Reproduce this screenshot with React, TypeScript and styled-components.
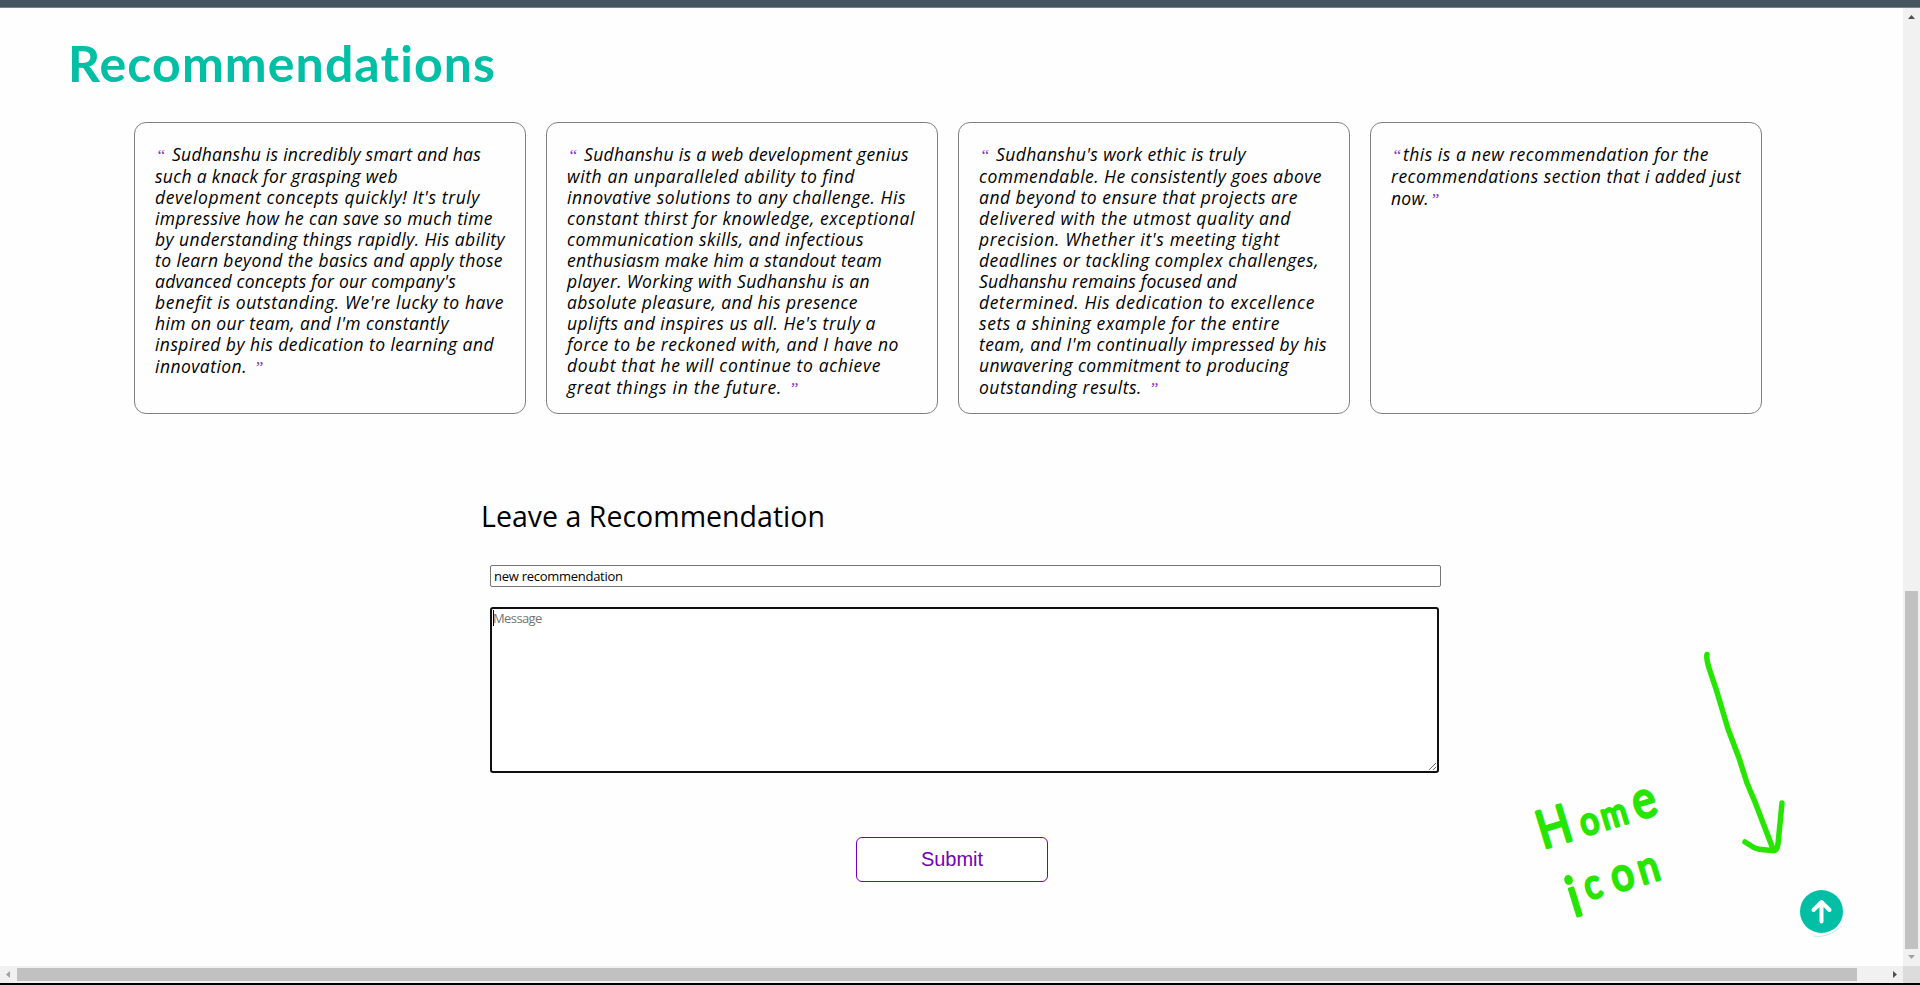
import React, { useLayoutEffect, useRef, useState } from "react";
import styled, { createGlobalStyle } from "styled-components";

const GlobalStyle = createGlobalStyle`
  * { box-sizing: border-box; }
  body {
    margin: 0;
    background: #fff;
    overflow: hidden;
    font-family: "Trebuchet MS", "Open Sans", "Noto Sans", sans-serif;
    color: #000;
  }
`;

const Window = styled.div`
  position: relative;
  display: flex;
  flex-direction: column;
  width: 1920px;
  height: 985px;
  background: #fefefe;
  border-bottom: 2px solid #000;
`;

const TopBar = styled.div`
  height: 8px;
  flex: none;
  background: #455660;
  border-bottom: 1px solid #77858b;
`;

const Viewport = styled.div`
  display: grid;
  flex: 1;
  grid-template-columns: 1903px 17px;
  grid-template-rows: 958px 17px;
`;

const Page = styled.main`
  display: flex;
  flex-direction: column;
  align-items: flex-start;
  overflow: hidden;
`;

const Title = styled.h1`
  margin: 22px 0 0 68px;
  height: 66px;
  line-height: 66px;
  font-family: "Trebuchet MS", Lato, sans-serif;
  font-size: 50px;
  font-weight: 700;
  color: #00bfa5;
  white-space: nowrap;
`;

const Cards = styled.section`
  display: flex;
  gap: 20px;
  margin: 26px 0 0 134px;
`;

const Card = styled.blockquote`
  width: 392px;
  height: 292px;
  margin: 0;
  padding: 20px 20px 0;
  border: 1px solid #808080;
  border-radius: 12px;
  font-size: 17.5px;
  font-style: italic;
`;

const Line = styled.div<{ $first?: boolean; $last?: boolean }>`
  height: ${(p) => (p.$first ? 23 : 21)}px;
  line-height: ${(p) => (p.$first || p.$last ? 23 : 21)}px;
  white-space: pre;
`;

const Quote = styled.span<{ $width: number; $indent: number }>`
  display: inline-block;
  width: ${(p) => p.$width}px;
  padding-left: ${(p) => p.$indent}px;
  font-family: "Liberation Serif", serif;
  font-size: 17px;
  line-height: 10px;
  color: #8630c8;
`;

const Form = styled.form`
  display: flex;
  flex-direction: column;
  align-items: flex-start;
  margin: 82px 0 0 481px;
  width: 961px;
`;

const FormTitle = styled.h2`
  margin: 0;
  height: 40px;
  line-height: 40px;
  font-size: 28.5px;
  font-weight: 400;
  white-space: nowrap;
`;

const NameInput = styled.input`
  width: 951px;
  height: 22px;
  margin: 29px 0 0 9px;
  padding: 0 3px;
  border: 1px solid #767676;
  border-radius: 2px;
  outline: none;
  background: #fff;
  color: #000;
  font: 13px "Trebuchet MS", "Open Sans", sans-serif;
  letter-spacing: -0.27px;
`;

const MessageWrap = styled.div`
  position: relative;
  margin: 20px 0 0 9px;
  width: 949px;
  height: 166px;
`;

const Message = styled.textarea`
  display: block;
  width: 100%;
  height: 100%;
  padding: 0 1px;
  border: 2px solid #101010;
  border-radius: 3px;
  outline: none;
  background: #fff;
  font: 13px/18px "Trebuchet MS", "Open Sans", sans-serif;
  letter-spacing: -0.6px;
  &::placeholder { color: #757575; }
`;

const Caret = styled.span`
  position: absolute;
  left: 3px;
  top: 3px;
  width: 1px;
  height: 16px;
  background: #000;
`;

const Submit = styled.button`
  width: 192px;
  height: 45px;
  margin: 64px 0 0 375px;
  padding: 0;
  border: 1px solid #7300b8;
  border-radius: 6px;
  background: #fff;
  color: #7300b8;
  font: 20px "Liberation Sans", Arial, sans-serif;
`;

const HomeButton = styled.a`
  position: absolute;
  left: 1800px;
  top: 890px;
  width: 43px;
  height: 43px;
  border-radius: 50%;
  background: #00bfa5;
  svg { display: block; }
`;

const Ink = styled.svg`
  position: absolute;
  left: 1500px;
  top: 620px;
  overflow: visible;
  pointer-events: none;
`;

const VTrack = styled.div`
  display: flex;
  flex-direction: column;
  align-items: center;
  background: #f1f1f1;
  svg { display: block; flex: none; }
`;

const VThumb = styled.div`
  width: 13px;
  height: 358px;
  margin-top: 566px;
  background: #c1c1c1;
`;

const HTrack = styled.div`
  display: flex;
  align-items: center;
  background: #f1f1f1;
  svg { display: block; flex: none; }
`;

const HThumb = styled.div`
  width: 1840px;
  height: 13px;
  margin-right: 29px;
  background: #c1c1c1;
`;

const Corner = styled.div`
  background: #dcdcdc;
`;

const Run = styled.span`
  display: inline-block;
  white-space: pre;
`;

/* Tracks a run of text so that it fills the given measure. */
function Fitted({ text, width }: { text: string; width: number }) {
  const ref = useRef<HTMLSpanElement>(null);
  const [spacing, setSpacing] = useState(0);
  useLayoutEffect(() => {
    if (ref.current) {
      const natural = ref.current.getBoundingClientRect().width;
      setSpacing((width - natural) / text.length);
    }
  }, [text, width]);
  return (
    <Run ref={ref} style={{ letterSpacing: `${spacing}px` }}>
      {text}
    </Run>
  );
}

type TextLine = [string, number];

const cards: { spaced: boolean; lines: TextLine[] }[] = [
  {
    spaced: true,
    lines: [
      ["Sudhanshu is incredibly smart and has", 309],
      ["such a knack for grasping web", 243],
      ["development concepts quickly! It's truly", 325],
      ["impressive how he can save so much time", 338],
      ["by understanding things rapidly. His ability", 350],
      ["to learn beyond the basics and apply those", 348],
      ["advanced concepts for our company's", 301],
      ["benefit is outstanding. We're lucky to have", 349],
      ["him on our team, and I'm constantly", 294],
      ["inspired by his dedication to learning and", 339],
      ["innovation.", 92],
    ],
  },
  {
    spaced: true,
    lines: [
      ["Sudhanshu is a web development genius", 325],
      ["with an unparalleled ability to find", 288],
      ["innovative solutions to any challenge. His", 339],
      ["constant thirst for knowledge, exceptional", 348],
      ["communication skills, and infectious", 297],
      ["enthusiasm make him a standout team", 315],
      ["player. Working with Sudhanshu is an", 303],
      ["absolute pleasure, and his presence", 291],
      ["uplifts and inspires us all. He's truly a", 309],
      ["force to be reckoned with, and I have no", 332],
      ["doubt that he will continue to achieve", 314],
      ["great things in the future.", 215],
    ],
  },
  {
    spaced: true,
    lines: [
      ["Sudhanshu's work ethic is truly", 250],
      ["commendable. He consistently goes above", 343],
      ["and beyond to ensure that projects are", 319],
      ["delivered with the utmost quality and", 312],
      ["precision. Whether it's meeting tight", 301],
      ["deadlines or tackling complex challenges,", 340],
      ["Sudhanshu remains focused and", 258],
      ["determined. His dedication to excellence", 336],
      ["sets a shining example for the entire", 301],
      ["team, and I'm continually impressed by his", 348],
      ["unwavering commitment to producing", 310],
      ["outstanding results.", 163],
    ],
  },
  {
    spaced: false,
    lines: [
      ["this is a new recommendation for the", 306],
      ["recommendations section that i added just", 350],
      ["now.", 38],
    ],
  },
];

export default function App() {
  return (
    <>
      <GlobalStyle />
      <Window>
        <TopBar />
        <Viewport>
          <Page>
            <Title>
              <Fitted text="Recommendations" width={429} />
            </Title>
            <Cards>
              {cards.map((card, c) => (
                <Card key={c}>
                  {card.lines.map(([text, width], i) => {
                    const first = i === 0;
                    const last = i === card.lines.length - 1;
                    return (
                      <Line key={i} $first={first} $last={last}>
                        {first && <Quote $width={card.spaced ? 17 : 12} $indent={1}>“</Quote>}
                        <Fitted text={text} width={width} />
                        {last && <Quote $width={18} $indent={card.spaced ? 7 : 1}>”</Quote>}
                      </Line>
                    );
                  })}
                </Card>
              ))}
            </Cards>
            <Form>
              <FormTitle>
                <Fitted text="Leave a Recommendation" width={344} />
              </FormTitle>
              <NameInput defaultValue="new recommendation" />
              <MessageWrap>
                <Message placeholder="Message" />
                <Caret />
              </MessageWrap>
              <Submit type="button">Submit</Submit>
            </Form>
          </Page>
          <VTrack>
            <svg width="17" height="17"><path d="M5 11h7L8.500 7z" fill="#505050" /></svg>
            <VThumb />
            <svg width="17" height="17"><path d="M5 6h7L8.500 10z" fill="#a3a3a3" /></svg>
          </VTrack>
          <HTrack>
            <svg width="17" height="17"><path d="M10 5v7L6 8.500z" fill="#a3a3a3" /></svg>
            <HThumb />
            <svg width="17" height="17"><path d="M7 5v7L11 8.500z" fill="#505050" /></svg>
          </HTrack>
          <Corner />
        </Viewport>

        <HomeButton>
          <svg width="50" height="50" viewBox="0 0 50 50" overflow="visible" fill="none">
            <path d="M21.500 31.500V12M13.500 20l8-8 8 8" stroke="#fff" strokeWidth="4" strokeLinecap="round" strokeLinejoin="round" />
            <path d="M13 46q14 3 29-10" stroke="#00bfa5" strokeOpacity="0.3" strokeWidth="0.8" />
          </svg>
        </HomeButton>

        <Ink width="340" height="340" viewBox="1500 620 340 340" fill="none">
          <g stroke="#26e600" strokeWidth="5.500" strokeLinecap="round" strokeLinejoin="round">
            <path d="M1707 654.500Q1706 658 1709 668L1717 692L1728 729L1739 758L1747 783L1755 802L1773 849" />
            <path d="M1782 803L1778 844Q1777 851 1773 850.500C1766 850 1757 850 1753 847L1745 842" />
          </g>
          <g
            fill="#26e600"
            stroke="#26e600"
            strokeWidth="2.800"
            strokeLinejoin="round"
            fontFamily="Lato, sans-serif"
            fontWeight="400"
          >
            <text transform="translate(1543 849) rotate(-17) scale(0.85 1)" x="0 50 76 116" y="0">
              <tspan fontSize="52">H</tspan>
              <tspan fontSize="39">o</tspan>
              <tspan fontSize="38">m</tspan>
              <tspan fontSize="52">e</tspan>
            </text>
            <text transform="translate(1578 916) rotate(-17) scale(0.85 1)" x="-5 17 50 83" y="0 -12 -11 -11">
              <tspan fontSize="56">i</tspan>
              <tspan fontSize="41">c</tspan>
              <tspan fontSize="47">o</tspan>
              <tspan fontSize="44">n</tspan>
            </text>
          </g>
        </Ink>
      </Window>
    </>
  );
}
